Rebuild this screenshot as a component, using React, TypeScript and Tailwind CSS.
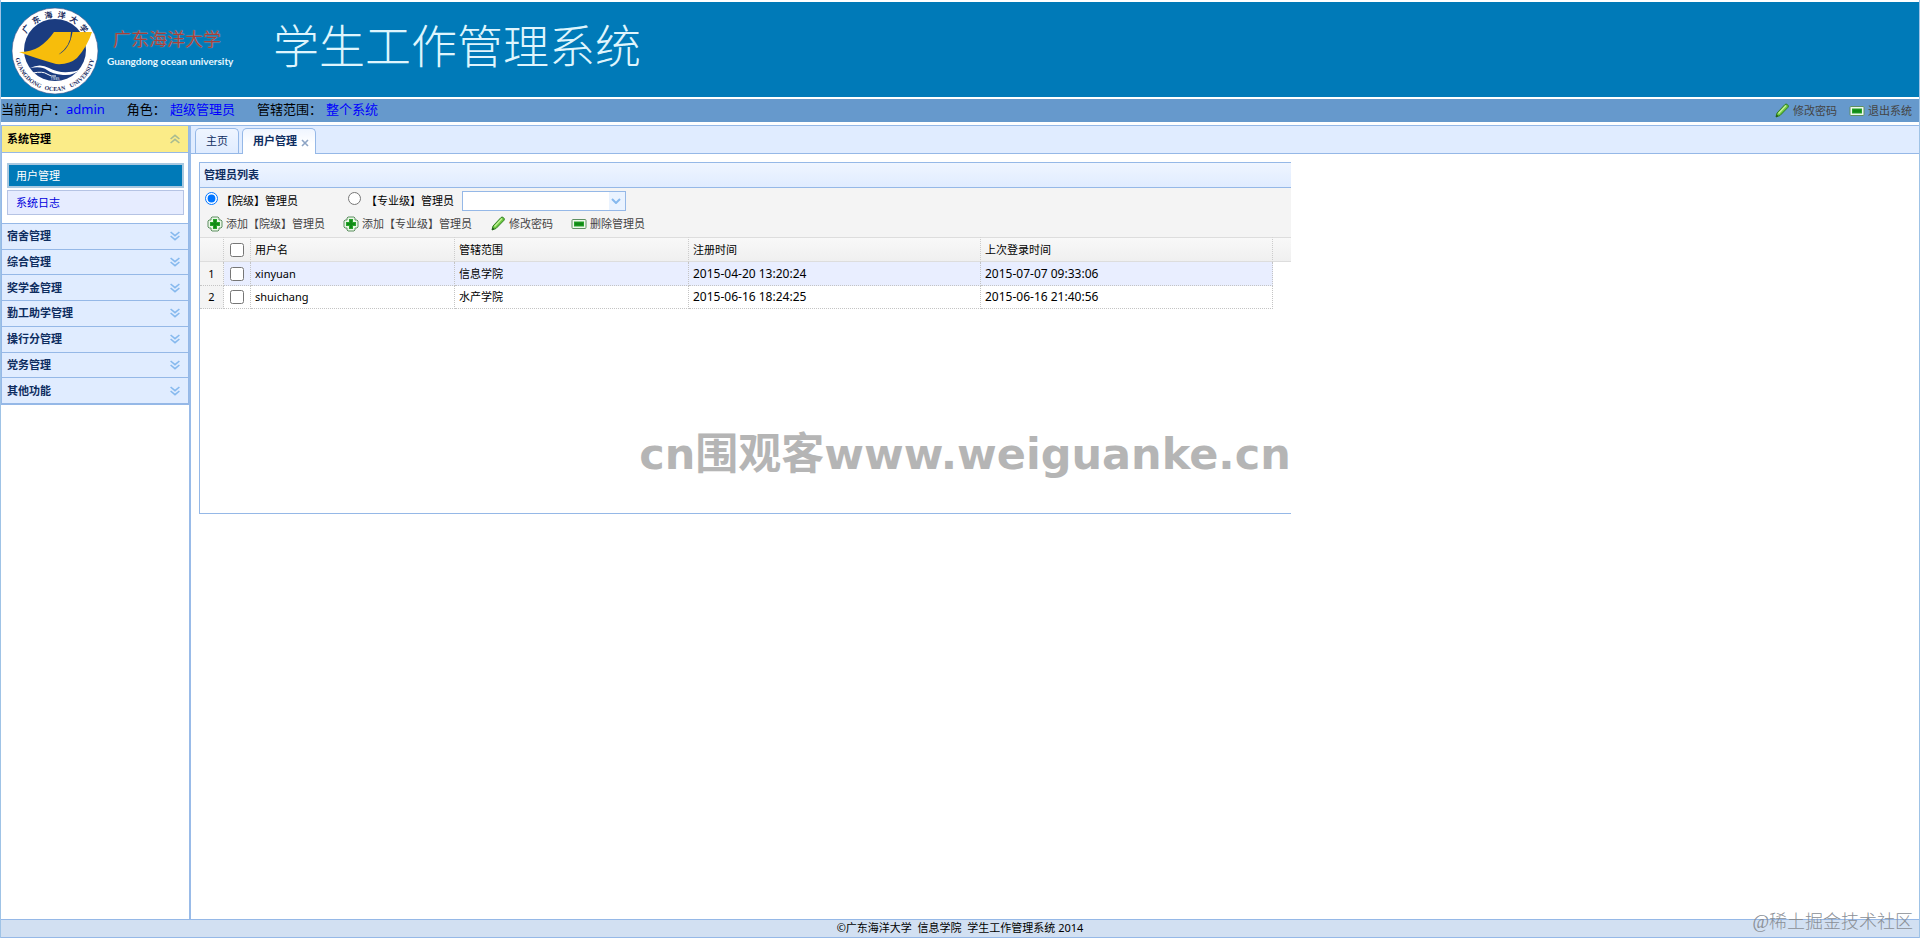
import { useState } from "react";
import clsx from "clsx";

const menu_groups = [
  "宿舍管理",
  "综合管理",
  "奖学金管理",
  "勤工助学管理",
  "操行分管理",
  "党务管理",
  "其他功能",
];

const admins = [
  { name: "xinyuan", scope: "信息学院", created: "2015-04-20 13:20:24", lastLogin: "2015-07-07 09:33:06" },
  { name: "shuichang", scope: "水产学院", created: "2015-06-16 18:24:25", lastLogin: "2015-06-16 21:40:56" },
];

function PlusIcon() {
  return (
    <svg viewBox="0 0 16 16" className="size-4 shrink-0" aria-hidden="true">
      <path
        d="M5 1h6l1 1v2h2l1 1v6l-1 1h-2v2l-1 1H5l-1-1v-2H2l-1-1V5l1-1h2V2z"
        fill="#e9f7e6"
        stroke="#5f8f62"
        strokeWidth="1"
      />
      <path d="M6 3h4v3h3v4h-3v3H6v-3H3V6h3z" fill="#26a32a" />
      <path d="M7 4h2v3h3v2H9v3H7V9H4V7h3z" fill="#108a16" />
    </svg>
  );
}

function PencilIcon() {
  return (
    <svg viewBox="0 0 16 16" className="size-4 shrink-0" aria-hidden="true">
      <path d="M2 14l1-4 8-8.500q1-1 2.500.2t.5 2.600L6 12.500z" fill="#6cc93f" stroke="#2f7d22" />
      <path d="M4.500 10.500l7.500-8" stroke="#c4f09b" strokeWidth="1.300" />
      <path d="M2 14l.700-2.500 1.700 1.500z" fill="#1d4d18" />
    </svg>
  );
}

function MinusIcon() {
  return (
    <svg viewBox="0 0 16 16" className="size-4 shrink-0" aria-hidden="true">
      <rect x="1" y="3.500" width="14" height="9" rx="1" fill="#eef8ec" stroke="#5f8f62" />
      <rect x="3" y="5.500" width="10" height="5" fill="#26a32a" />
      <rect x="4" y="6.500" width="8" height="3" fill="#108a16" />
    </svg>
  );
}

function Chevrons({ up = false }: { up?: boolean }) {
  return (
    <svg
      viewBox="0 0 10 10"
      className={clsx("size-[10px]", up ? "rotate-180 text-[#a8bb91]" : "text-[#86b9ee]")}
      fill="none"
      stroke="currentColor"
      strokeWidth="1.600"
      aria-hidden="true"
    >
      <path d="M.600 1L5 4.600 9.400 1M.600 5L5 8.600 9.400 5" />
    </svg>
  );
}

const motto = [
  { word: "GUANGDONG", offset: "22%" },
  { word: "OCEAN", offset: "50%" },
  { word: "UNIVERSITY", offset: "78%" },
];

function Logo() {
  return (
    <svg viewBox="0 0 88 88" className="size-[88px] shrink-0" role="img" aria-label="广东海洋大学">
      <defs>
        <path id="arc-top" d="M10.500 44a33.500 33.500 0 0 1 67 0" />
        <path id="arc-bottom" d="M4 44a40 40 0 0 0 80 0" />
      </defs>
      <circle cx="44" cy="44" r="43" fill="#fff" stroke="#40508a" strokeWidth=".6" />
      <circle cx="44" cy="43" r="31" fill="#1b3c80" />
      <path
        d="M8 45q12 0 20-5 9-6 15-15h38Q76 40 66 51q-8 7-21 6Q24 51 8 45z"
        fill="#f7bd0b"
      />
      <path d="M60 25q0 14-13 23 12-6 14.500-23z" fill="#1b3c80" />
      <path d="M19 61q10-5 19 0t20 4 13-4q-8 8-19 7T36 63t-17-2z" fill="#fff" />
      <path d="M22 66q10-2 14 1t9 2" fill="none" stroke="#fff" />
      <text fontSize="8" fontWeight="700" fill="#222c5e" textAnchor="middle">
        <textPath href="#arc-top" startOffset="50%">
          {"广\u00a0 东\u00a0 海\u00a0 洋\u00a0 大\u00a0 学"}
        </textPath>
      </text>
      {motto.map(({ word, offset }) => (
        <text
          key={word}
          fontSize="6"
          fontWeight="700"
          fill="#222c5e"
          textAnchor="middle"
          className="font-['Liberation_Serif',serif]"
        >
          <textPath href="#arc-bottom" startOffset={offset}>
            {word}
          </textPath>
        </text>
      ))}
      <text x="44" y="73" fontSize="4" fill="#fff" textAnchor="middle">
        1935
      </text>
    </svg>
  );
}

function Header() {
  return (
    <header>
      <div className="mt-[2px] flex h-[95px] items-start bg-[#007ab8]">
        <div className="flex pt-[5px] pl-[10px]">
          <Logo />
          <div className="w-[174px] pt-5 pl-2">
            <p className="pl-[6px] text-[18px] leading-[24px] text-[#a5403a] [text-shadow:0_0_1px_#cfc6c0]">
              广东海洋大学
            </p>
            <p className="pt-[2px] font-['Lato',sans-serif] text-[10px] leading-[16px] font-bold whitespace-nowrap text-[#e6f7ff]">
              Guangdong ocean university
            </p>
          </div>
        </div>
        <h1 className="pt-[11px] text-[46px] leading-[64px] font-extralight text-[#dff5fd]">学生工作管理系统</h1>
      </div>
      <div className="mt-[2px] mb-[3px] flex h-[23px] items-center justify-between bg-[#6699cc] pr-[7px] text-[13px] leading-[20px] text-black">
        <dl className="flex gap-[22px] pb-[3px]">
          <div className="flex">
            <dt>当前用户：</dt>
            <dd className="text-[#0000ff]">admin</dd>
          </div>
          <div className="flex">
            <dt>角色：</dt>
            <dd className="pl-1 text-[#0000ff]">超级管理员</dd>
          </div>
          <div className="flex">
            <dt>管辖范围：</dt>
            <dd className="pl-1 text-[#0000ff]">整个系统</dd>
          </div>
        </dl>
        <div className="flex gap-3 text-[11px] text-[#444]">
          <button type="button" className="flex items-center gap-[3px]">
            <PencilIcon />
            修改密码
          </button>
          <button type="button" className="flex items-center gap-[3px]">
            <MinusIcon />
            退出系统
          </button>
        </div>
      </div>
    </header>
  );
}

function Sidebar() {
  return (
    <aside className="w-[190px] shrink-0 border-r-2 border-[#99bbe8]">
      <nav className="border-x border-b-2 border-[#95b8e7] text-[11px] leading-[16px]">
        <button
          type="button"
          className="flex h-[27px] w-full items-center justify-between border-b border-[#95b8e7] bg-[#fbec88] pr-2 pl-[5px] font-bold text-black"
        >
          系统管理
          <Chevrons up />
        </button>
        <div className="flex flex-col gap-[2px] bg-white pt-[10px] pr-1 pb-2 pl-[5px]">
          <a
            href="#users"
            className="flex h-[25px] items-center border-2 border-[#a9c8e0] bg-[#007ab8] pl-[7px] text-white"
          >
            用户管理
          </a>
          <a
            href="#logs"
            className="flex h-[25px] items-center border border-[#b5c3e4] bg-[#e6ecff] pl-2 text-[#0000dd]"
          >
            系统日志
          </a>
        </div>
        <div className="grid h-[180px] auto-rows-fr">
          {menu_groups.map((name) => (
            <button
              key={name}
              type="button"
              className="flex items-center justify-between border-t border-[#95b8e7] bg-[#e0ecff] pr-2 pl-[5px] font-bold text-[#0e2d5f]"
            >
              {name}
              <Chevrons />
            </button>
          ))}
        </div>
      </nav>
    </aside>
  );
}

function Tabs() {
  return (
    <div role="tablist" className="flex h-7 items-end gap-[3px] border-b border-[#95b8e7] bg-[#e0ecff] pl-1 text-[11px]">
      <button
        type="button"
        role="tab"
        aria-selected="false"
        className="h-[25px] rounded-t-[5px] border border-b-0 border-[#95b8e7] bg-linear-to-b from-[#eff5ff] to-[#e0ecff] px-[10px] text-[#0e2d5f]"
      >
        主页
      </button>
      <button
        type="button"
        role="tab"
        aria-selected="true"
        className="-mb-px flex h-[26px] items-center gap-1 rounded-t-[5px] border border-b-0 border-[#95b8e7] bg-linear-to-b from-[#eff5ff] to-white to-60% pr-[6px] pl-[10px] font-bold text-[#0e2d5f]"
      >
        用户管理
        <svg viewBox="0 0 8 8" className="mt-[2px] size-2" stroke="#8da4c4" strokeWidth="1.600" aria-hidden="true">
          <path d="M1 1l6 6M7 1L1 7" />
        </svg>
      </button>
    </div>
  );
}

function Toolbar() {
  const [level, setLevel] = useState("college");

  return (
    <div className="h-[49px] bg-[#f4f4f4] text-[11px] leading-[16px] text-black">
      <div className="flex h-[25px] items-center pl-[5px]">
        <input
          id="level-college"
          type="radio"
          name="level"
          className="mb-1 size-[13px]"
          checked={level === "college"}
          onChange={() => setLevel("college")}
        />
        <label htmlFor="level-college" className="w-[130px] pl-[3px]">
          【院级】管理员
        </label>
        <input
          id="level-major"
          type="radio"
          name="level"
          className="mb-1 size-[13px]"
          checked={level === "major"}
          onChange={() => setLevel("major")}
        />
        <label htmlFor="level-major" className="pr-2 pl-[5px]">
          【专业级】管理员
        </label>
        <div className="relative">
          <select
            aria-label="专业"
            className="block h-5 w-[164px] appearance-none border border-[#95b8e7] bg-white bg-linear-to-l from-[#eaf3ff] from-[16px] to-white to-[16px] px-1"
          >
            <option value=""></option>
          </select>
          <svg
            viewBox="0 0 10 6"
            className="pointer-events-none absolute top-[7px] right-[5px] h-[6px] w-[10px]"
            fill="none"
            stroke="#86b9ee"
            strokeWidth="2"
            aria-hidden="true"
          >
            <path d="M1 1l4 4 4-4" />
          </svg>
        </div>
      </div>
      <div className="flex h-[21px] items-center gap-[18px] pl-[7px] text-[#444]">
        <button type="button" className="flex items-center gap-[3px]">
          <PlusIcon />
          添加【院级】管理员
        </button>
        <button type="button" className="flex items-center gap-[3px]">
          <PlusIcon />
          添加【专业级】管理员
        </button>
        <button type="button" className="flex items-center gap-[3px]">
          <PencilIcon />
          修改密码
        </button>
        <button type="button" className="flex items-center gap-[3px]">
          <MinusIcon />
          删除管理员
        </button>
      </div>
    </div>
  );
}

function AdminTable() {
  const cell = "border-r border-b border-dotted border-[#c4c4c4]";

  return (
    <table className="w-full table-fixed border-separate border-spacing-0 text-left text-[11px] leading-[16px] text-black">
      <colgroup>
        <col className="w-6" />
        <col className="w-[27px]" />
        <col className="w-[204px]" />
        <col className="w-[234px]" />
        <col className="w-[292px]" />
        <col className="w-[292px]" />
        <col />
      </colgroup>
      <thead>
        <tr className="h-[25px] bg-linear-to-b from-[#f9f9f9] to-[#efefef] [&>th]:border-y [&>th]:border-y-[#dddddd] [&>th]:font-normal">
          <th className="border-r border-r-[#cccccc] [border-right-style:dotted]"></th>
          <th className="border-r border-r-[#cccccc] pl-[6px] [border-right-style:dotted]">
            <input type="checkbox" aria-label="全选" className="block size-[14px]" />
          </th>
          <th className="border-r border-r-[#cccccc] pl-1 [border-right-style:dotted]">用户名</th>
          <th className="border-r border-r-[#cccccc] pl-1 [border-right-style:dotted]">管辖范围</th>
          <th className="border-r border-r-[#cccccc] pl-1 [border-right-style:dotted]">注册时间</th>
          <th className="border-r border-r-[#cccccc] pl-1 [border-right-style:dotted]">上次登录时间</th>
          <th></th>
        </tr>
      </thead>
      <tbody>
        {admins.map((admin, index) => (
          <tr key={admin.name} className={clsx(index === 0 ? "h-6 bg-[#e9eeff]" : "h-[23px] bg-white")}>
            <td className={clsx(cell, "bg-[#f4f4f4] text-center")}>{index + 1}</td>
            <td className={clsx(cell, "pl-[6px]")}>
              <input type="checkbox" aria-label={admin.name} className="block size-[14px]" />
            </td>
            <td className={clsx(cell, "pl-1")}>{admin.name}</td>
            <td className={clsx(cell, "pl-1")}>{admin.scope}</td>
            <td className={clsx(cell, "pl-1 text-[12px]")}>{admin.created}</td>
            <td className={clsx(cell, "pl-1 text-[12px]")}>{admin.lastLogin}</td>
            <td className="bg-white"></td>
          </tr>
        ))}
      </tbody>
    </table>
  );
}

export default function App() {
  return (
    <div className="relative flex min-h-screen flex-col border-x border-[#9fc3e6] bg-white font-['Noto_Sans','Noto_Sans_CJK_SC',sans-serif]">
      <Header />
      <div className="flex flex-1 border-t border-[#95b8e7]">
        <Sidebar />
        <main className="min-w-0 flex-1">
          <Tabs />
          <section className="mt-2 ml-2 min-h-[352px] w-full max-w-[1092px] border-y border-l border-[#95b8e7] bg-white">
            <h2 className="flex h-[25px] items-center border-b border-[#95b8e7] bg-linear-to-b from-[#eff5ff] to-[#e0ecff] pl-1 text-[11px] font-bold text-[#0e2d5f]">
              管理员列表
            </h2>
            <Toolbar />
            <AdminTable />
          </section>
        </main>
      </div>
      <footer className="flex h-[19px] items-center justify-center border-y border-[#95b8e7] bg-[#d2e0f2] text-[11px] whitespace-pre text-black">
        ©广东海洋大学&nbsp; 信息学院&nbsp; 学生工作管理系统 2014
      </footer>

      {/* watermarks */}
      <p className="pointer-events-none absolute inset-x-0 top-[422px] pl-[10px] text-center font-['DejaVu_Sans','Noto_Sans_CJK_SC',sans-serif] text-[43px] leading-[64px] font-bold text-[#b5b5b5]">
        cn围观客www.weiguanke.cn
      </p>
      <p className="pointer-events-none absolute right-[6px] bottom-1 font-['Liberation_Serif','Noto_Sans_CJK_SC',serif] text-[18px] leading-[24px] font-light text-[#8a8f96]">
        @稀土掘金技术社区
      </p>
    </div>
  );
}
